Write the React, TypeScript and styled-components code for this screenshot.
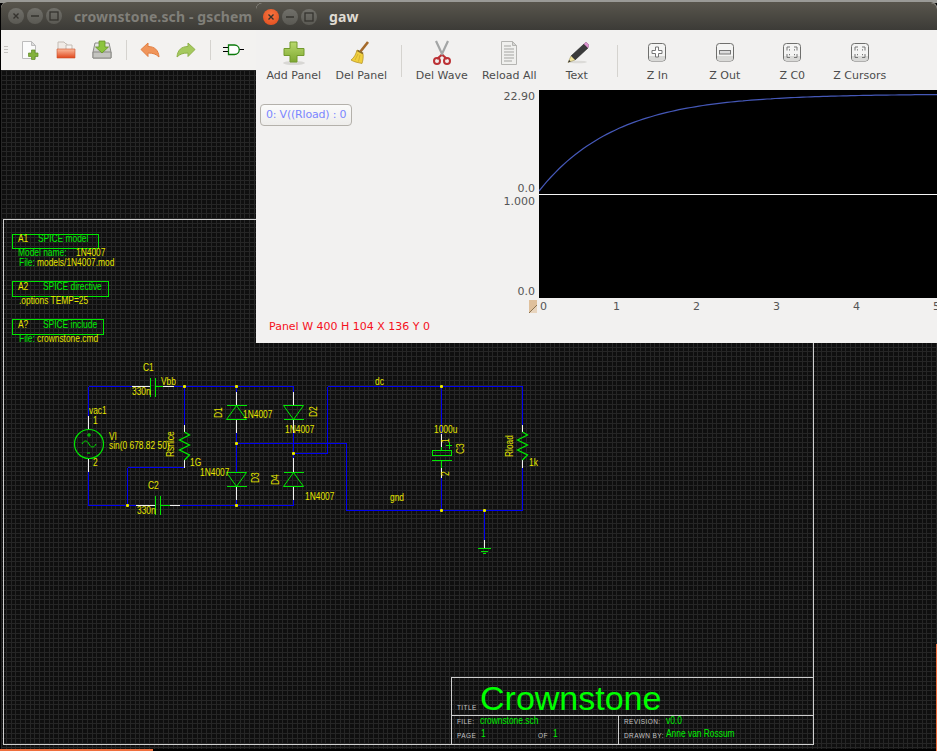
import styled, { createGlobalStyle } from "styled-components";

const GlobalStyle = createGlobalStyle`
  html, body {
    margin: 0;
    padding: 0;
    background: #000;
    overflow: hidden;
  }
`;

const Desktop = styled.div`
  position: relative;
  width: 937px;
  height: 751px;
  overflow: hidden;
  background: #000;
`;

const TopStrip = styled.div`
  height: 3px;
  background: #9a9a96;
`;

const Window = styled.div<{ $left: number; $top: number; $width: number; $height: number }>`
  position: absolute;
  left: ${(p) => p.$left}px;
  top: ${(p) => p.$top}px;
  width: ${(p) => p.$width}px;
  height: ${(p) => p.$height}px;
  display: flex;
  flex-direction: column;
  background: #f2f1f0;
  border-radius: 6px 6px 0 0;
  overflow: hidden;
`;

const TitleBar = styled.div<{ $height: number }>`
  flex: none;
  height: ${(p) => p.$height}px;
  display: flex;
  align-items: center;
  padding-left: 7px;
  background: linear-gradient(#58554c, #3c3b37);
`;

const WinButtons = styled.div`
  display: flex;
  gap: 3px;
  margin-right: 12px;
`;

const WinButton = styled.div<{ $close?: boolean }>`
  width: 16px;
  height: 16px;
  border-radius: 50%;
  display: flex;
  align-items: center;
  justify-content: center;
  background: ${(p) =>
    p.$close ? "radial-gradient(circle at 50% 35%, #f8743f, #df4a1c)" : "linear-gradient(#71706a, #5a5953)"};
  color: #35332e;
`;

const WinTitle = styled.span<{ $active?: boolean }>`
  font-family: "Noto Sans", "DejaVu Sans", sans-serif;
  font-weight: 700;
  font-size: 14px;
  letter-spacing: 0.13px;
  white-space: nowrap;
  color: ${(p) => (p.$active ? "#dfdbd2" : "#807f79")};
`;

const SchemToolbar = styled.div`
  flex: none;
  height: 40px;
  display: flex;
  align-items: center;
  padding-left: 3px;
  background: #f3f2f0;
`;

const Grip = styled.div`
  width: 4px;
  height: 9px;
  margin-right: 4px;
  background: repeating-linear-gradient(#c5c3bf 0 1px, transparent 1px 3px);
`;

const SchemTool = styled.div`
  width: 36px;
  height: 40px;
  display: flex;
  align-items: center;
  justify-content: center;
`;

const ToolSep = styled.div<{ $width: number; $height: number; $top?: number }>`
  width: ${(p) => p.$width}px;
  margin-top: ${(p) => p.$top ?? 0}px;
  display: flex;
  justify-content: center;

  &::before {
    content: "";
    width: 1px;
    height: ${(p) => p.$height}px;
    background: #d5d3cf;
  }
`;

const SchemCanvas = styled.svg`
  display: block;
  flex: none;
  background: #0f0f0f;
`;

const GawToolbar = styled.div`
  flex: none;
  height: 60px;
  display: flex;
  align-items: flex-start;
  padding-left: 4px;
  background: #f2f1f0;
`;

const GawTool = styled.div`
  width: 67.5px;
  height: 60px;
  display: flex;
  flex-direction: column;
  align-items: center;
  padding-top: 6px;
  box-sizing: border-box;
`;

const GawIcon = styled.div`
  height: 33px;
  display: flex;
  align-items: center;
  justify-content: center;
`;

const ToolLabel = styled.span`
  font-family: "DejaVu Sans", sans-serif;
  font-size: 11px;
  line-height: 14px;
  color: #4c4c4c;
  white-space: nowrap;
`;

const PanelRow = styled.div<{ $height: number }>`
  flex: none;
  height: ${(p) => p.$height}px;
  display: flex;
`;

const LabelArea = styled.div`
  flex: none;
  width: 283px;
  display: flex;
  box-sizing: border-box;
  padding-right: 4px;
`;

const WaveSlot = styled.div`
  flex: 1;
  padding: 14px 0 0 4px;
`;

const WaveButton = styled.div`
  width: 92px;
  height: 22px;
  box-sizing: border-box;
  border: 1px solid #b4b1ab;
  border-radius: 4px;
  background: linear-gradient(#fbfbfa, #eeedeb);
  font-family: "DejaVu Sans", sans-serif;
  font-size: 11px;
  letter-spacing: -0.2px;
  line-height: 20px;
  padding-left: 5px;
  color: #7b87ff;
  white-space: nowrap;
`;

const Axis = styled.div`
  display: flex;
  flex-direction: column;
  justify-content: space-between;
  align-items: flex-end;
  font-family: "DejaVu Sans", sans-serif;
  font-size: 11px;
  line-height: 13px;
  color: #555;
`;

const Plot = styled.svg<{ $divider?: boolean }>`
  display: block;
  flex: 1;
  min-width: 0;
  height: 100%;
  background: #000;
  box-sizing: border-box;
  border-bottom: ${(p) => (p.$divider ? "1px solid #f4f4f4" : "none")};
`;

const Ruler = styled.div`
  flex: none;
  height: 16px;
  display: flex;
  align-items: center;
  font-family: "DejaVu Sans", sans-serif;
  font-size: 11px;
  color: #555;
`;

const RulerLead = styled.div`
  flex: none;
  width: 284px;
  display: flex;
  justify-content: flex-end;
  padding-right: 3px;
  box-sizing: border-box;
`;

const Handle = styled.div`
  width: 8px;
  height: 13px;
  background: linear-gradient(135deg, #dfc09c 0 58%, #8c7350 58% 66%, #e8d4bd 66%);
`;

const Tick = styled.span`
  flex: none;
  width: 80px;

  &:first-of-type {
    width: 73px;
  }
`;

const StatusLine = styled.div`
  padding: 6px 0 0 13px;
  font-family: "DejaVu Sans", sans-serif;
  font-size: 11px;
  line-height: 14px;
  color: #f5101c;
  white-space: nowrap;
`;

const BottomBar = styled.div`
  position: absolute;
  left: 0;
  bottom: 0;
  width: 153px;
  height: 2px;
  background: #ef6f3e;
`;

const EdgeBar = styled.div`
  position: absolute;
  right: 0;
  bottom: 0;
  width: 1px;
  height: 107px;
  background: #ef6f3e;
`;

const SchemText = styled.text<{ $kind: "y" | "g" }>`
  font-family: "Liberation Sans", sans-serif;
  font-size: 10.5px;
  fill: ${(p) => (p.$kind === "y" ? "#e6e600" : "#00ee00")};
`;

const SmallCaps = styled.text`
  font-family: "Liberation Sans", sans-serif;
  font-size: 6.5px;
  letter-spacing: 0.4px;
  fill: #c4c4c4;
`;

const BigTitle = styled.text`
  font-family: "Liberation Sans", sans-serif;
  font-size: 34px;
  fill: #00ff00;
`;

const ArrowSvg = styled.svg<{ $flip?: boolean }>`
  transform: ${(p) => (p.$flip ? "scaleX(-1)" : "none")};
`;

type Seg = [number, number, number, number];

const blue: Seg[] = [
  [88.5, 386.5, 132, 386.5],
  [174, 386.5, 293.5, 386.5],
  [88.5, 386.5, 88.5, 416],
  [88.5, 472, 88.5, 505.5],
  [88.5, 505.5, 136, 505.5],
  [180, 505.5, 293.5, 505.5],
  [184.5, 386.5, 184.5, 425],
  [184.5, 467.5, 127.5, 467.5],
  [127.5, 467.5, 127.5, 505.5],
  [236.5, 386.5, 236.5, 392],
  [236.5, 433, 236.5, 472],
  [236.5, 500, 236.5, 505.5],
  [293.5, 386.5, 293.5, 392],
  [293.5, 433, 293.5, 458],
  [293.5, 500, 293.5, 505.5],
  [236.5, 443.5, 346.5, 443.5],
  [346.5, 443.5, 346.5, 510.5],
  [293.5, 453.5, 327.5, 453.5],
  [327.5, 453.5, 327.5, 386.5],
  [327.5, 386.5, 522.5, 386.5],
  [441.5, 386.5, 441.5, 434],
  [441.5, 478, 441.5, 510.5],
  [522.5, 386.5, 522.5, 425],
  [522.5, 468, 522.5, 510.5],
  [346.5, 510.5, 522.5, 510.5],
  [484.5, 510.5, 484.5, 540],
];

const white: Seg[] = [
  [132, 386.5, 150, 386.5],
  [163, 386.5, 174, 386.5],
  [88.5, 416, 88.5, 429],
  [88.5, 459, 88.5, 472],
  [136, 505.5, 155, 505.5],
  [170, 505.5, 180, 505.5],
  [184.5, 425, 184.5, 432],
  [184.5, 460, 184.5, 467.5],
  [236.5, 392, 236.5, 405],
  [236.5, 419, 236.5, 433],
  [236.5, 487, 236.5, 500],
  [293.5, 392, 293.5, 405],
  [293.5, 419, 293.5, 433],
  [293.5, 458, 293.5, 472],
  [293.5, 487, 293.5, 500],
  [441.5, 434, 441.5, 447],
  [441.5, 468, 441.5, 478],
  [522.5, 425, 522.5, 432],
  [522.5, 460, 522.5, 468],
  [484.5, 540, 484.5, 548],
];

const green: Seg[] = [
  [150.5, 378, 150.5, 397],
  [155.5, 378, 155.5, 397],
  [155.5, 386.5, 163, 386.5],
  [155.5, 496, 155.5, 515],
  [160.5, 496, 160.5, 515],
  [160.5, 505.5, 170, 505.5],
  [226.5, 405.5, 246.5, 405.5],
  [226.5, 486.5, 246.5, 486.5],
  [283.5, 419.5, 303.5, 419.5],
  [283.5, 472.5, 303.5, 472.5],
  [432, 460.5, 452, 460.5],
  [441.5, 447, 441.5, 450],
  [441.5, 460.5, 441.5, 468],
  [446, 445.5, 452, 445.5],
  [449.5, 442, 449.5, 449],
  [478, 548.5, 491, 548.5],
  [481, 551.5, 488, 551.5],
  [483, 553.5, 486, 553.5],
];

const dots: [number, number][] = [
  [184.5, 386.5],
  [236.5, 386.5],
  [236.5, 443.5],
  [293.5, 453.5],
  [127.5, 505.5],
  [236.5, 505.5],
  [441.5, 386.5],
  [441.5, 510.5],
  [484.5, 510.5],
];

const diodes = [
  "226.5,419.5 246.5,419.5 236.5,405.5",
  "283.5,405.5 303.5,405.5 293.5,419.5",
  "226.5,472.5 246.5,472.5 236.5,486.5",
  "283.5,486.5 303.5,486.5 293.5,472.5",
];

const zigzag = (x: number) =>
  `${x},432 ${x + 5},435 ${x - 5},440 ${x + 5},445 ${x - 5},450 ${x + 5},455 ${x},460`;

type Label = { x: number; y: number; t: string; k: "y" | "g"; rot?: boolean };

const labels: Label[] = [
  { x: 18, y: 242, t: "A1", k: "y" },
  { x: 38, y: 242, t: "SPICE model", k: "g" },
  { x: 18, y: 256, t: "Model name:", k: "g" },
  { x: 76, y: 256, t: "1N4007", k: "y" },
  { x: 19, y: 266, t: "File:", k: "g" },
  { x: 37, y: 266, t: "models/1N4007.mod", k: "y" },
  { x: 18, y: 290, t: "A2", k: "y" },
  { x: 43, y: 290, t: "SPICE directive", k: "g" },
  { x: 19, y: 304, t: ".options TEMP=25", k: "y" },
  { x: 18, y: 328, t: "A?", k: "y" },
  { x: 43, y: 328, t: "SPICE include", k: "g" },
  { x: 19, y: 342, t: "File:", k: "g" },
  { x: 37, y: 342, t: "crownstone.cmd", k: "y" },
  { x: 143, y: 371, t: "C1", k: "y" },
  { x: 132, y: 395, t: "330n", k: "y" },
  { x: 161, y: 385, t: "Vbb", k: "y" },
  { x: 89, y: 414, t: "vac1", k: "y" },
  { x: 93, y: 424, t: "1", k: "y" },
  { x: 109, y: 440, t: "VI", k: "y" },
  { x: 109, y: 449, t: "sin(0 678.82 50)", k: "y" },
  { x: 93, y: 466, t: "2", k: "y" },
  { x: 174, y: 457, t: "Rsnice", k: "y", rot: true },
  { x: 190, y: 466, t: "1G", k: "y" },
  { x: 222, y: 418, t: "D1", k: "y", rot: true },
  { x: 243, y: 418, t: "1N4007", k: "y" },
  { x: 317, y: 417, t: "D2", k: "y", rot: true },
  { x: 285, y: 433, t: "1N4007", k: "y" },
  { x: 200, y: 476, t: "1N4007", k: "y" },
  { x: 259, y: 483, t: "D3", k: "y", rot: true },
  { x: 279, y: 485, t: "D4", k: "y", rot: true },
  { x: 305, y: 500, t: "1N4007", k: "y" },
  { x: 148, y: 489, t: "C2", k: "y" },
  { x: 137, y: 514, t: "330n", k: "y" },
  { x: 375, y: 385, t: "dc", k: "y" },
  { x: 434, y: 433, t: "1000u", k: "y" },
  { x: 464, y: 454, t: "C3", k: "y", rot: true },
  { x: 449, y: 443, t: "1", k: "y", rot: true },
  { x: 449, y: 476, t: "2", k: "y", rot: true },
  { x: 390, y: 501, t: "gnd", k: "y" },
  { x: 513, y: 457, t: "Rload", k: "y", rot: true },
  { x: 529, y: 466, t: "1k", k: "y" },
  { x: 480, y: 724, t: "crownstone.sch", k: "g" },
  { x: 666, y: 724, t: "v0.0", k: "g" },
  { x: 481, y: 737, t: "1", k: "g" },
  { x: 553, y: 737, t: "1", k: "g" },
  { x: 666, y: 737, t: "Anne van Rossum", k: "g" },
];

const captions: [number, number, string][] = [
  [457, 710, "TITLE"],
  [457, 724, "FILE:"],
  [624, 724, "REVISION:"],
  [457, 738, "PAGE"],
  [538, 738, "OF"],
  [624, 738, "DRAWN BY:"],
];

// gschem draws one grid line every 4.77px at this zoom level
const gridPath = () => {
  const step = 4.77;
  let d = "";
  for (let x = 1; x < 937; x += step) d += `M${Math.round(x) + 0.5} 70V749`;
  for (let y = 70; y < 749; y += step) d += `M1 ${Math.round(y) + 0.5}H937`;
  return d;
};

const Lines = ({ segs, color }: { segs: Seg[]; color: string }) => (
  <g stroke={color} shapeRendering="crispEdges">
    {segs.map(([x1, y1, x2, y2], i) => (
      <line key={i} x1={x1} y1={y1} x2={x2} y2={y2} />
    ))}
  </g>
);

const Schematic = () => (
  <SchemCanvas viewBox="1 70 936 679" width={936} height={679}>
    <path d={gridPath()} stroke="#262626" fill="none" shapeRendering="crispEdges" />

    <g fill="none" stroke="#cfcfcf" shapeRendering="crispEdges">
      <rect x={3.5} y={219.5} width={810} height={525} />
      <rect x={451.5} y={677.5} width={362} height={67} />
      <line x1={451.5} y1={715.5} x2={813.5} y2={715.5} />
      <line x1={618.5} y1={715.5} x2={618.5} y2={744.5} />
    </g>

    <g fill="none" stroke="#00e600" shapeRendering="crispEdges">
      <rect x={12.5} y={234.5} width={86} height={14} />
      <rect x={12.5} y={281.5} width={96} height={15} />
      <rect x={12.5} y={319.5} width={91} height={15} />
    </g>

    <Lines segs={blue} color="#0000f0" />
    <Lines segs={white} color="#f2f2f2" />
    <Lines segs={green} color="#00e800" />

    <g fill="none" stroke="#00e800">
      {diodes.map((p) => (
        <polygon key={p} points={p} />
      ))}
      <polyline points={zigzag(184.5)} strokeWidth={1.3} />
      <polyline points={zigzag(522.5)} strokeWidth={1.3} />
      <rect x={432.5} y={450.5} width={19} height={5} shapeRendering="crispEdges" />
      <circle cx={89} cy={444} r={14.5} strokeWidth={1.2} />
      <path d="M82 444c2-4 5-4 7 0s5 4 7 0" />
      <path d="M89 433v4M87 435h4M87 453h3" />
    </g>

    <g fill="#e6e600">
      {dots.map(([x, y]) => (
        <rect key={`${x}-${y}`} x={x - 1.5} y={y - 1.5} width={3} height={3} rx={1} />
      ))}
    </g>

    {labels.map((l, i) => (
      <SchemText
        key={i}
        $kind={l.k}
        transform={`translate(${l.x} ${l.y})${l.rot ? " rotate(-90)" : ""} scale(0.8 1)`}
      >
        {l.t}
      </SchemText>
    ))}
    {captions.map(([x, y, t]) => (
      <SmallCaps key={t} x={x} y={y}>
        {t}
      </SmallCaps>
    ))}
    <BigTitle x={480} y={710}>
      Crownstone
    </BigTitle>
  </SchemCanvas>
);

const charge = () => {
  const pts: string[] = [];
  for (let x = 0; x <= 400; x += 4) {
    const y = 101 - 97 * (1 - Math.exp(-x / 77));
    pts.push(`${x},${y.toFixed(1)}`);
  }
  return pts.join(" ");
};

const Close = () => (
  <svg width={8} height={8} viewBox="0 0 8 8">
    <path d="M1.500 1.500l5 5M6.500 1.500l-5 5" stroke="#35332e" strokeWidth={1.4} />
  </svg>
);
const Minimize = () => (
  <svg width={10} height={8} viewBox="0 0 10 8">
    <path d="M1 4h8" stroke="#35332e" strokeWidth={1.4} />
  </svg>
);
const Maximize = () => (
  <svg width={10} height={10} viewBox="0 0 10 10">
    <rect x={1} y={1} width={8} height={8} fill="none" stroke="#35332e" strokeWidth={1.3} />
  </svg>
);

const NewDocIcon = () => (
  <svg width={20} height={20} viewBox="0 0 20 20">
    <path d="M2.500 1.500h9l4 4v13h-13z" fill="#fbfbfb" stroke="#bdbdbd" />
    <path d="M11.500 1.500v4h4z" fill="#dedede" stroke="#bdbdbd" />
    <path d="M11.500 10h3.500v3h3v3.500h-3v3h-3.500v-3h-3V13h3z" fill="#82b13a" stroke="#5f8a25" strokeWidth={0.7} />
  </svg>
);
const FolderIcon = () => (
  <svg width={20} height={20} viewBox="0 0 20 20">
    <defs>
      <linearGradient id="folder-body" x1="0" y1="0" x2="0" y2="1">
        <stop offset="0" stopColor="#fbbb9c" />
        <stop offset="1" stopColor="#e0471c" />
      </linearGradient>
    </defs>
    <path d="M2 10V2h6l2 2h1v7z" fill="#f0ebe6" stroke="#c4bdb5" />
    <path d="M10 5h6v6h-6z" fill="#f6f3f0" stroke="#c4bdb5" />
    <path d="M1 18V9h18v9z" fill="url(#folder-body)" stroke="#c9502b" strokeWidth={0.6} />
  </svg>
);
const SaveIcon = () => (
  <svg width={20} height={20} viewBox="0 0 20 20">
    <defs>
      <linearGradient id="save-body" x1="0" y1="0" x2="0" y2="1">
        <stop offset="0" stopColor="#f0f0ee" />
        <stop offset="1" stopColor="#a8a8a4" />
      </linearGradient>
    </defs>
    <path d="M3 3h14l2 9v6H1v-6z" fill="url(#save-body)" stroke="#8a8a86" />
    <path d="M1 12h18v6H1z" fill="#c4c4c0" stroke="#8a8a86" />
    <path d="M7 1h6v6h3.500l-6.500 6-6.500-6H7z" fill="#8cc43e" stroke="#659326" strokeWidth={0.8} />
  </svg>
);
const UndoIcon = ({ flip }: { flip?: boolean }) => (
  <ArrowSvg $flip={flip} width={20} height={16} viewBox="0 0 20 16">
    <path
      d="M1 7.500L8 1V4.500C14.500 4.500 18.500 8 19 15C16 12 13 11 8 11V14.500Z"
      fill={flip ? "#a5c95e" : "#f0955a"}
      stroke={flip ? "#8fb24a" : "#e07e42"}
    />
  </ArrowSvg>
);
const GateIcon = () => (
  <svg width={22} height={12} viewBox="0 0 22 12">
    <path d="M0 3.500h6M0 7.500h6M16 5.500h5" stroke="#000" strokeWidth={1.2} />
    <path d="M5.500 1h6a4.500 4.500 0 0 1 0 9.500h-6z" fill="#fff" stroke="#0a7a0a" strokeWidth={1.3} />
  </svg>
);

const PlusIcon = () => (
  <svg width={24} height={26} viewBox="0 0 24 26">
    <defs>
      <linearGradient id="add-body" x1="0" y1="0" x2="0" y2="1">
        <stop offset="0" stopColor="#b9d96c" />
        <stop offset="1" stopColor="#7fa832" />
      </linearGradient>
    </defs>
    <ellipse cx={12} cy={23} rx={11} ry={2} fill="#d8d7d4" />
    <path d="M8 2h7v6.500h7v7h-7V22H8v-6.500H2v-7h6z" fill="url(#add-body)" stroke="#739a2d" />
  </svg>
);
const BroomIcon = () => (
  <svg width={24} height={26} viewBox="0 0 24 26">
    <path d="M19 2L11.500 11.500" stroke="#a56a2a" strokeWidth={2.6} />
    <path d="M8 10L14 13.500C14.500 17 14 20.500 13 23.500C9 22.500 5 22 2 20C5 18 7 14 8 10Z" fill="#f0cf3c" stroke="#b8962a" strokeWidth={0.8} />
    <path d="M8.500 10.500L14 13.500" stroke="#8a6b2a" strokeWidth={1.5} />
    <path d="M9 14L6 20M11 15L9.500 21.500" stroke="#c9a52c" strokeWidth={0.7} />
  </svg>
);
const ScissorsIcon = () => (
  <svg width={20} height={26} viewBox="0 0 20 26">
    <path d="M4 1l7 15M16 1L9 16" stroke="#a4a6a6" strokeWidth={2.2} />
    <path d="M9.500 15L5 19M10.500 15L15 19" stroke="#bc3236" strokeWidth={2.2} />
    <circle cx={5} cy={21} r={3} fill="none" stroke="#bc3236" strokeWidth={2} />
    <circle cx={15} cy={21} r={3} fill="none" stroke="#bc3236" strokeWidth={2} />
  </svg>
);
const PageIcon = () => (
  <svg width={20} height={26} viewBox="0 0 20 26">
    <path d="M2.500 1.500h11l4 4v19h-15z" fill="#f0f0ee" stroke="#b5b5b2" />
    <path d="M13.500 1.500v4h4z" fill="#d5d5d2" stroke="#b5b5b2" />
    <path d="M5 6h7M5 9h10M5 12h10M5 15h10M5 18h10M5 21h8" stroke="#a5a5a2" />
  </svg>
);
const PencilIcon = () => (
  <svg width={24} height={26} viewBox="0 0 24 26">
    <ellipse cx={13} cy={22} rx={9} ry={1.3} fill="#dcdbd8" />
    <path d="M6 16L19 4l4 4L10 20z" fill="#3b3b3b" stroke="#1f1f1f" strokeWidth={0.6} />
    <path d="M19 4l2-2 3 3-1 3z" fill="#dc94cf" stroke="#a36a98" strokeWidth={0.6} />
    <path d="M6 16l4 4-7 2.500z" fill="#f0e39c" stroke="#9a9060" strokeWidth={0.6} />
    <path d="M4.200 20l1.500 1.500L3 22.500z" fill="#333" />
  </svg>
);
const ZoomBox = ({ kind }: { kind: "in" | "out" | "fit" }) => (
  <svg width={18} height={19} viewBox="0 0 18 19">
    <rect x={0.5} y={0.5} width={17} height={17.5} rx={3} fill="#f4f4f3" stroke="#6f6f6d" />
    <path d="M1 13h16v2a3 3 0 0 1-3 3H4a3 3 0 0 1-3-3z" fill="#d9d9d7" />
    {kind === "in" && <path d="M7.500 4h3v3.500h3.500v3h-3.500V14h-3v-3.500H4v-3h3.500z" fill="#fff" stroke="#777" />}
    {kind === "out" && <rect x={3.5} y={7.5} width={11} height={3.5} fill="#ddd" stroke="#777" />}
    {kind === "fit" && (
      <path
        d="M7 4H4v3.500M11 4h3v3.500M7 14.500H4V11M11 14.500h3V11M7 6.500H6.500v1M11 6.500h.5v1M7 12h-.5v-1M11 12h.5v-1"
        fill="none"
        stroke="#777"
      />
    )}
  </svg>
);

const tools = [
  { label: "Add Panel", icon: <PlusIcon /> },
  { label: "Del Panel", icon: <BroomIcon /> },
  null,
  { label: "Del Wave", icon: <ScissorsIcon /> },
  { label: "Reload All", icon: <PageIcon /> },
  { label: "Text", icon: <PencilIcon /> },
  null,
  { label: "Z In", icon: <ZoomBox kind="in" /> },
  { label: "Z Out", icon: <ZoomBox kind="out" /> },
  { label: "Z C0", icon: <ZoomBox kind="fit" /> },
  { label: "Z Cursors", icon: <ZoomBox kind="fit" /> },
];

const WindowButtons = ({ active }: { active?: boolean }) => (
  <WinButtons>
    <WinButton $close={active}>
      <Close />
    </WinButton>
    <WinButton>
      <Minimize />
    </WinButton>
    <WinButton>
      <Maximize />
    </WinButton>
  </WinButtons>
);

const App = () => (
  <Desktop>
    <GlobalStyle />
    <TopStrip />
    <Window $left={1} $top={2} $width={936} $height={747}>
      <TitleBar $height={28}>
        <WindowButtons />
        <WinTitle>crownstone.sch - gschem</WinTitle>
      </TitleBar>
      <SchemToolbar>
        <Grip />
        <SchemTool>
          <NewDocIcon />
        </SchemTool>
        <SchemTool>
          <FolderIcon />
        </SchemTool>
        <SchemTool>
          <SaveIcon />
        </SchemTool>
        <ToolSep $width={12} $height={20} />
        <SchemTool>
          <UndoIcon />
        </SchemTool>
        <SchemTool>
          <UndoIcon flip />
        </SchemTool>
        <ToolSep $width={12} $height={20} />
        <SchemTool>
          <GateIcon />
        </SchemTool>
      </SchemToolbar>
      <Schematic />
    </Window>
    <Window $left={256} $top={3} $width={681} $height={340}>
      <TitleBar $height={27}>
        <WindowButtons active />
        <WinTitle $active>gaw</WinTitle>
      </TitleBar>
      <GawToolbar>
        {tools.map((tool, i) =>
          tool ? (
            <GawTool key={tool.label}>
              <GawIcon>{tool.icon}</GawIcon>
              <ToolLabel>{tool.label}</ToolLabel>
            </GawTool>
          ) : (
            <ToolSep key={i} $width={13} $height={32} $top={15} />
          ),
        )}
      </GawToolbar>
      <PanelRow $height={105}>
        <LabelArea>
          <WaveSlot>
            <WaveButton>0: V((Rload) : 0</WaveButton>
          </WaveSlot>
          <Axis>
            <span>22.90</span>
            <span>0.0</span>
          </Axis>
        </LabelArea>
        <Plot $divider viewBox="0 0 398 104" preserveAspectRatio="none">
          <polyline points={charge()} fill="none" stroke="#4558b8" strokeWidth={1.2} />
        </Plot>
      </PanelRow>
      <PanelRow $height={103}>
        <LabelArea>
          <WaveSlot />
          <Axis>
            <span>1.000</span>
            <span>0.0</span>
          </Axis>
        </LabelArea>
        <Plot viewBox="0 0 398 103" />
      </PanelRow>
      <Ruler>
        <RulerLead>
          <Handle />
        </RulerLead>
        <Tick>0</Tick>
        <Tick>1</Tick>
        <Tick>2</Tick>
        <Tick>3</Tick>
        <Tick>4</Tick>
        <Tick>5</Tick>
      </Ruler>
      <StatusLine>Panel W 400 H 104 X 136 Y 0</StatusLine>
    </Window>
    <BottomBar />
    <EdgeBar />
  </Desktop>
);

export default App;
